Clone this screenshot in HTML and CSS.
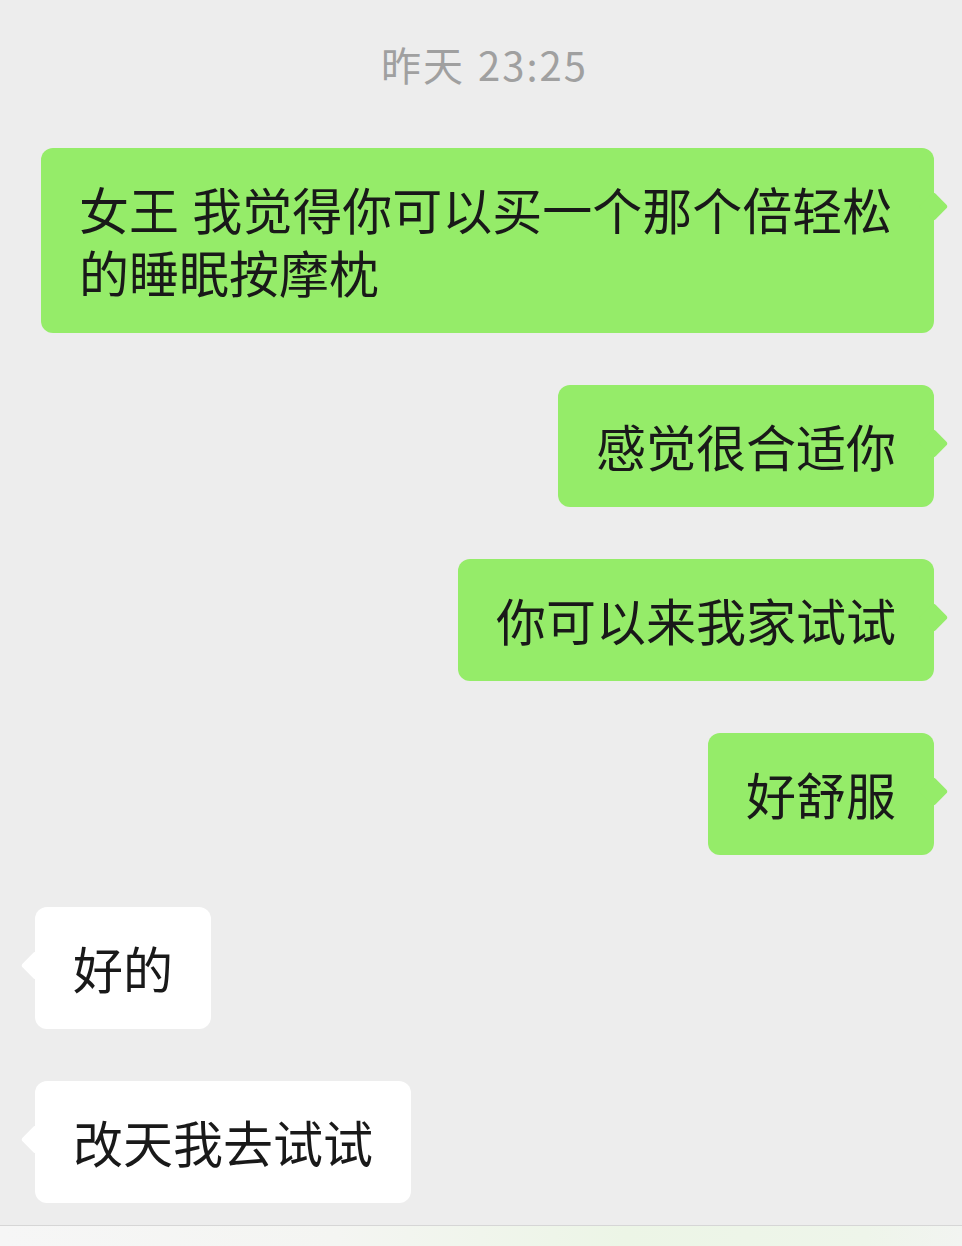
FILE: index.html
```html
<!DOCTYPE html>
<html lang="zh-CN">

<head>
    <meta charset="UTF-8">
    <title>聊天</title>
    <link rel="stylesheet" href="styles.css">
</head>

<body>
    <main class="chat">
        <div class="time">昨天 23:25</div>
        <section class="messages">
            <div class="row mine">
                <p class="bubble wide">女王 我觉得你可以买一个那个倍轻松的睡眠按摩枕</p>
            </div>
            <div class="row mine">
                <p class="bubble">感觉很合适你</p>
            </div>
            <div class="row mine">
                <p class="bubble">你可以来我家试试</p>
            </div>
            <div class="row mine">
                <p class="bubble">好舒服</p>
            </div>
            <div class="row theirs">
                <p class="bubble">好的</p>
            </div>
            <div class="row theirs">
                <p class="bubble">改天我去试试</p>
            </div>
        </section>
    </main>
    <footer class="inputbar"></footer>
</body>

</html>
```

FILE: styles.css
```css
body {
    margin: 0;
    min-height: 100vh;
    display: flex;
    flex-direction: column;
    background-color: #ededed;
    font-family: "Noto Sans CJK SC", "Noto Sans", sans-serif;
    color: #191919;
}

.chat {
    display: flex;
    flex-direction: column;
    padding: 39px 28px 0 35px;
}

.time {
    text-align: center;
    font-size: 40px;
    line-height: 50px;
    letter-spacing: 2px;
    word-spacing: 2px;
    color: #a0a0a0;
}

.messages {
    display: flex;
    flex-direction: column;
    gap: 52px;
    margin-top: 59px;
}

.row {
    display: flex;
}

.row.mine {
    justify-content: flex-end;
}

.row.theirs {
    justify-content: flex-start;
}

.bubble {
    position: relative;
    margin: 0;
    max-width: 893px;
    box-sizing: border-box;
    padding: 29px 38px 30px;
    font-size: 50px;
    line-height: 63px;
    word-spacing: 2px;
    border-radius: 12px;
}

.bubble::after {
    content: "";
    position: absolute;
    top: 48px;
    width: 21px;
    height: 21px;
    border-radius: 3px;
    transform: rotate(45deg);
}

.mine .bubble,
.mine .bubble::after {
    background-color: #95ec69;
}

.mine .bubble::after {
    right: -10px;
}

.theirs .bubble,
.theirs .bubble::after {
    background-color: #ffffff;
}

.theirs .bubble::after {
    left: -10px;
}

.inputbar {
    margin-top: auto;
    height: 20px;
    border-top: 1px solid #d6d6d6;
    background: linear-gradient(90deg, #f6f6f6 0%, #f4f5f2 35%, #ecf5e6 65%, #eef5ea 90%, #f2f4f1 100%);
}
```
